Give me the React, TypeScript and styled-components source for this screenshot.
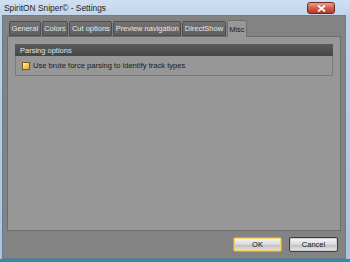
import styled, { createGlobalStyle } from "styled-components";

const Global = createGlobalStyle`
    html, body {
        margin: 0;
        padding: 0;
        background: #7fa7c9;
    }
    body {
        font-family: "Liberation Sans", Arial, sans-serif;
    }
`;

const Window = styled.div`
    width: 350px;
    height: 262px;
    box-sizing: border-box;
    background: linear-gradient(#cfe0f1, #bcd2e9 20px, #a9c4e2);
    border-bottom: 3px solid #2a8ea8;
    display: flex;
    flex-direction: column;
    padding: 0 4px 0 2px;
`;

const TitleBar = styled.div`
    height: 17px;
    display: flex;
    align-items: center;
    justify-content: space-between;
    padding-left: 2px;
    padding-right: 11px;
`;

const Title = styled.span`
    font-family: "Liberation Sans", Arial, sans-serif;
    font-size: 8.4px;
    color: #1e1e1e;
`;

const CloseButton = styled.div`
    width: 28px;
    height: 12px;
    margin-top: 1px;
    border: 1px solid #6b2a22;
    border-radius: 3px;
    background: linear-gradient(#e8a192, #cf5f4b 50%, #b73a28);
    display: flex;
    align-items: center;
    justify-content: center;
    box-sizing: border-box;
`;

const Client = styled.div`
    flex: 1;
    background: #838383;
    border: 1px solid #6a7c8e;
    display: flex;
    flex-direction: column;
    padding: 4px 4px 6px 4px;
`;

const TabRow = styled.div`
    display: flex;
    align-items: flex-end;
    padding-left: 2px;
    height: 16px;
    gap: 1px;
`;

const Tab = styled.div<{ $active?: boolean }>`
    font-size: 7.5px;
    box-sizing: border-box;
    height: ${(p) => (p.$active ? "17px" : "15px")};
    padding: 0 1.5px;
    display: flex;
    align-items: center;
    white-space: nowrap;
    border: 1px solid ${(p) => (p.$active ? "#6f6f6f" : "#4d4d4d")};
    border-bottom: ${(p) => (p.$active ? "none" : "1px solid #4d4d4d")};
    border-radius: 2px 2px 0 0;
    background: ${(p) =>
        p.$active ? "#989898" : "linear-gradient(#737373, #5f5f5f)"};
    color: ${(p) => (p.$active ? "#1c1c1c" : "#e8e8e8")};
    margin-bottom: ${(p) => (p.$active ? "-1px" : "0")};
    position: relative;
    z-index: ${(p) => (p.$active ? 1 : 0)};
`;

const Panel = styled.div`
    height: 195px;
    box-sizing: border-box;
    background: #979797;
    border: 1px solid #6d6d6d;
    padding: 7px 7px;
`;

const Group = styled.div`
    border: 1px solid #7a7a7a;
    border-top: none;
`;

const GroupHeader = styled.div`
    height: 12px;
    background: linear-gradient(#5b5b5b, #464646);
    color: #e4e4e4;
    font-size: 7.5px;
    display: flex;
    align-items: center;
    padding-left: 5px;
    margin: 0 -1px;
`;

const GroupBody = styled.div`
    height: 19px;
    display: flex;
    align-items: center;
    padding-left: 6px;
    gap: 3px;
    font-size: 7.6px;
    color: #1a1a1a;
`;

const CheckBox = styled.span`
    width: 8px;
    height: 8px;
    box-sizing: border-box;
    border: 1px solid #7a5a18;
    background: linear-gradient(135deg, #fff2b8, #f5c443 60%, #e6a41e);
`;

const ButtonRow = styled.div`
    display: flex;
    justify-content: flex-end;
    gap: 7px;
    margin-top: 6px;
    padding-right: 3px;
`;

const Button = styled.div<{ $default?: boolean }>`
    width: 49px;
    height: 15px;
    box-sizing: border-box;
    border: 1px solid ${(p) => (p.$default ? "#d9a514" : "#3e3e3e")};
    box-shadow: ${(p) =>
        p.$default ? "inset 0 0 0 1px #f3d46a" : "inset 0 0 0 1px #cfcfcf"};
    border-radius: 2px;
    background: linear-gradient(#fafafa, #d8d8d8 50%, #bdbdbd 51%, #e6e6e6);
    font-size: 7.5px;
    color: #111;
    display: flex;
    align-items: center;
    justify-content: center;
`;

const tabs = ["General", "Colors", "Cut options", "Preview navigation", "DirectShow", "Misc"];

export default function App() {
    return (
        <>
            <Global />
            <Window>
                <TitleBar>
                    <Title>SpiritON Sniper© - Settings</Title>
                    <CloseButton>
                        <svg width="9" height="7" viewBox="0 0 9 7">
                            <path d="M1 0.5 L8 6.5 M8 0.5 L1 6.5" stroke="#fff" strokeWidth="1.8" />
                        </svg>
                    </CloseButton>
                </TitleBar>
                <Client>
                    <TabRow>
                        {tabs.map((t) => (
                            <Tab key={t} $active={t === "Misc"}>{t}</Tab>
                        ))}
                    </TabRow>
                    <Panel>
                        <Group>
                            <GroupHeader>Parsing options</GroupHeader>
                            <GroupBody>
                                <CheckBox />
                                Use brute force parsing to identify track types
                            </GroupBody>
                        </Group>
                    </Panel>
                    <ButtonRow>
                        <Button $default>OK</Button>
                        <Button>Cancel</Button>
                    </ButtonRow>
                </Client>
            </Window>
        </>
    );
}
